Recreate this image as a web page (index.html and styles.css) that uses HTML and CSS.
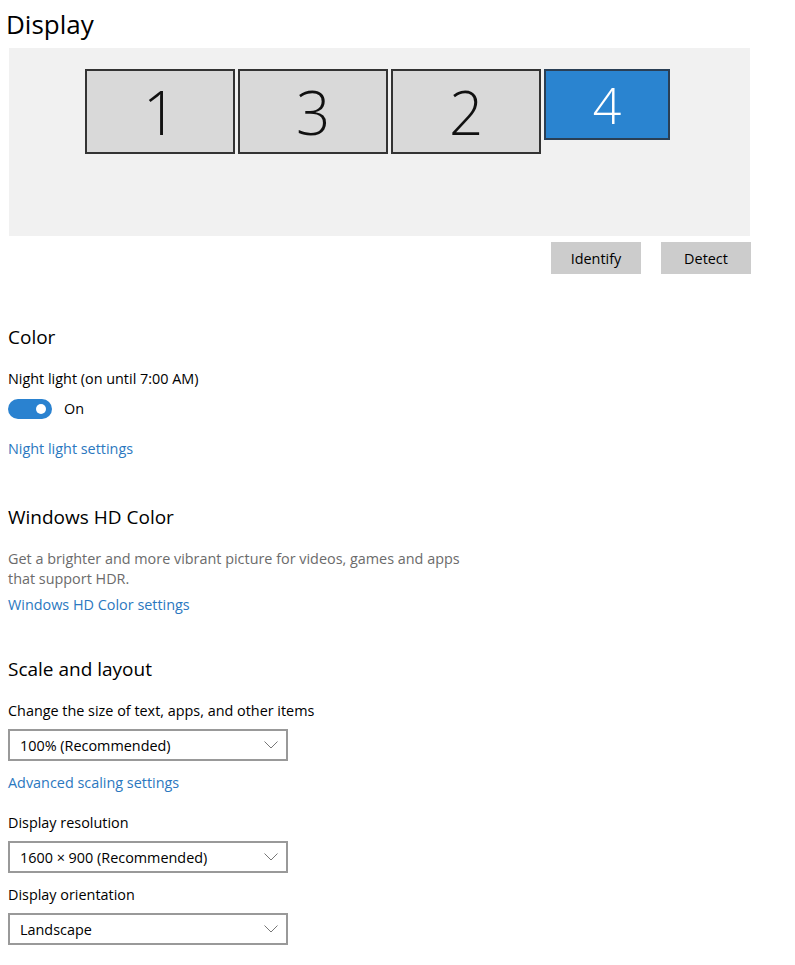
FILE: index.html
```html
<!DOCTYPE html>
<html lang="en">
<head>
    <meta charset="UTF-8">
    <meta name="viewport" content="width=device-width, initial-scale=1.0">
    <title>Settings - Display</title>
    <link rel="stylesheet" href="styles.css">
</head>
<body>
    <div class="page">
        <h1 class="title">Display</h1>

        <!-- Arrangement of the connected monitors -->
        <div class="preview">
            <div class="monitors">
                <div class="monitor">1</div>
                <div class="monitor">3</div>
                <div class="monitor">2</div>
                <div class="monitor small selected">4</div>
            </div>
        </div>
        <div class="actions">
            <button class="btn">Identify</button>
            <button class="btn">Detect</button>
        </div>

        <section class="group color-group">
            <h2>Color</h2>
            <p class="label">Night light (on until 7:00 AM)</p>
            <div class="toggle-row">
                <span class="toggle"><span class="knob"></span></span>
                <span class="toggle-text">On</span>
            </div>
            <a class="link night-link" href="#">Night light settings</a>
        </section>

        <section class="group hd-group">
            <h2>Windows HD Color</h2>
            <p class="desc">Get a brighter and more vibrant picture for videos, games and apps<br>that support HDR.</p>
            <a class="link hd-link" href="#">Windows HD Color settings</a>
        </section>

        <section class="group scale-group">
            <h2>Scale and layout</h2>
            <p class="label">Change the size of text, apps, and other items</p>
            <div class="select">
                <span>100% (Recommended)</span>
                <svg class="chevron" width="14" height="8" viewBox="0 0 14 8"><path d="M0.5 0.5 L7 7 L13.5 0.5" fill="none" stroke="#777" stroke-width="1"/></svg>
            </div>
            <a class="link scale-link" href="#">Advanced scaling settings</a>

            <p class="label field-label">Display resolution</p>
            <div class="select">
                <span>1600 &times; 900 (Recommended)</span>
                <svg class="chevron" width="14" height="8" viewBox="0 0 14 8"><path d="M0.5 0.5 L7 7 L13.5 0.5" fill="none" stroke="#777" stroke-width="1"/></svg>
            </div>

            <p class="label orient-label">Display orientation</p>
            <div class="select">
                <span>Landscape</span>
                <svg class="chevron" width="14" height="8" viewBox="0 0 14 8"><path d="M0.5 0.5 L7 7 L13.5 0.5" fill="none" stroke="#777" stroke-width="1"/></svg>
            </div>
        </section>
    </div>
</body>
</html>
```
FILE: styles.css
```css
body {
    margin: 0;
    background-color: #ffffff;
    color: #000000;
    font-family: 'Open Sans', 'Noto Sans', sans-serif;
    font-size: 14.4px;
}

.page {
    padding: 0 0 20px 8px;
}

.title {
    margin: 6px 0 6px -2px;
    font-size: 26px;
    font-weight: 400;
    line-height: 36px;
}

/* Monitor arrangement */
.preview {
    margin-left: 1px;
    width: 741px;
    height: 188px;
    background-color: #f1f1f1;
    box-sizing: border-box;
    padding: 21px 0 0 76px;
}

.monitors {
    display: flex;
    align-items: flex-start;
    gap: 3px;
}

.monitor {
    width: 150px;
    height: 85px;
    box-sizing: border-box;
    border: 2px solid #333333;
    background-color: #d9d9d9;
    display: flex;
    align-items: center;
    justify-content: center;
    font-size: 60px;
    font-weight: 300;
    line-height: 1;
    color: #111111;
}

.monitor.small {
    width: 126px;
    height: 71px;
    font-size: 50px;
}

.monitor.selected {
    background-color: #2a84d0;
    color: #ffffff;
    border-color: #2a3f55;
}

.actions {
    width: 743px;
    display: flex;
    justify-content: flex-end;
    gap: 20px;
    margin-top: 6px;
}

.btn {
    width: 90px;
    height: 32px;
    border: none;
    background-color: #cccccc;
    font-family: inherit;
    font-size: 14.4px;
    color: #000000;
    padding: 0;
}

/* Settings groups */
h2 {
    margin: 0;
    font-size: 19px;
    font-weight: 400;
    line-height: 28px;
}

.group p {
    margin: 0;
}

.color-group {
    margin-top: 49px;
}

.label {
    margin-top: 18px !important;
    line-height: 20px;
}

.toggle-row {
    display: flex;
    align-items: center;
    margin-top: 10px;
    height: 20px;
}

.toggle {
    width: 44px;
    height: 20px;
    border-radius: 10px;
    background-color: #2a82d0;
    position: relative;
}

.knob {
    position: absolute;
    top: 5px;
    right: 6px;
    width: 10px;
    height: 10px;
    border-radius: 50%;
    background-color: #ffffff;
}

.toggle-text {
    margin-left: 12px;
    line-height: 20px;
}

.link {
    display: block;
    color: #2b78c0;
    text-decoration: none;
    line-height: 20px;
}

.night-link {
    margin-top: 20px;
}

.hd-group {
    margin-top: 44px;
}

.desc {
    margin-top: 18px !important;
    color: #6b6b6b;
    line-height: 20px;
}

.hd-link {
    margin-top: 6px;
}

.scale-group {
    margin-top: 40px;
}

.select {
    width: 280px;
    height: 32px;
    box-sizing: border-box;
    border: 2px solid #999999;
    margin-top: 8px;
    padding: 0 8px 0 10px;
    display: flex;
    align-items: center;
    justify-content: space-between;
}

.scale-link {
    margin-top: 12px;
}

.field-label {
    margin-top: 20px !important;
}

.orient-label {
    margin-top: 12px !important;
}
```
